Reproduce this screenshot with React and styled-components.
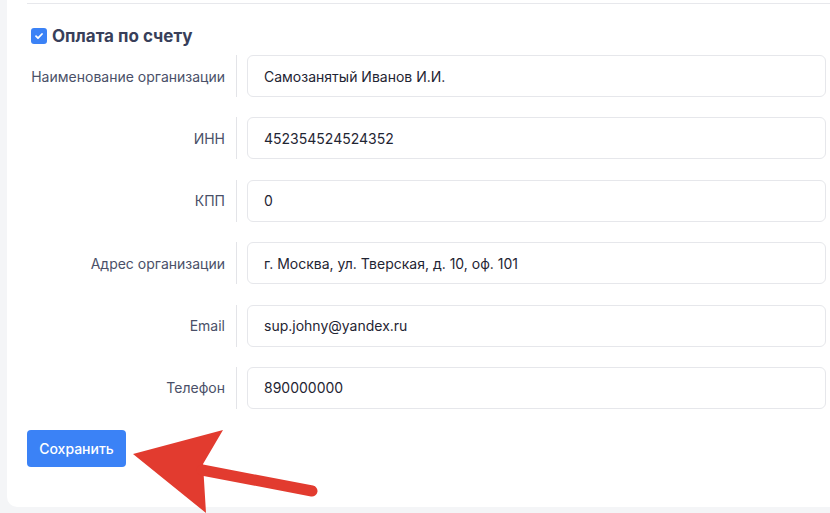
import React from "react";
import styled, { createGlobalStyle } from "styled-components";

const GlobalStyle = createGlobalStyle`
  html, body {
    margin: 0;
    padding: 0;
    background: #f4f5f7;
    font-family: Inter, "Noto Sans", "Liberation Sans", sans-serif;
  }
`;

const Page = styled.div`
  position: relative;
  width: 830px;
  height: 513px;
  overflow: hidden;
  padding: 0 0 6px 7px;
  box-sizing: border-box;
`;

const Card = styled.div`
  background: #fff;
  border-radius: 0 0 0 10px;
  padding: 3px 0 40px 20px;
  height: 100%;
  box-sizing: border-box;
`;

const Divider = styled.div`
  height: 1px;
  background: #e7e8ec;
`;

const Heading = styled.label`
  display: flex;
  align-items: center;
  gap: 5px;
  margin: 21px 0 8px 4px;
  font-size: 17px;
  font-weight: 700;
  color: #383f5a;
  line-height: 22px;
`;

const Check = styled.span`
  width: 16px;
  height: 16px;
  border-radius: 3px;
  background: #3b82f6;
  display: flex;
  align-items: center;
  justify-content: center;
`;

const Rows = styled.div`
  display: flex;
  flex-direction: column;
  gap: 20.4px;
`;

const Row = styled.div`
  display: flex;
  align-items: stretch;
  height: 42px;
`;

const Label = styled.div`
  width: 210px;
  box-sizing: border-box;
  padding-right: 11px;
  border-right: 1px solid #e3e4e8;
  display: flex;
  align-items: center;
  justify-content: flex-end;
  font-size: 14px;
  color: #4a5068;
`;

const Field = styled.div`
  flex: 1;
  margin: 0 4px 0 10px;
  border: 1px solid #e6e7eb;
  border-radius: 6px;
  padding-left: 16px;
  display: flex;
  align-items: center;
  font-size: 14px;
  color: #1f2533;
`;

const Button = styled.button`
  margin-top: 21px;
  width: 99px;
  height: 37px;
  border: none;
  border-radius: 4px;
  background: #3b82f6;
  color: #fff;
  font-family: inherit;
  font-size: 14px;
  font-weight: 500;
`;

const Arrow = styled.svg`
  position: absolute;
  left: 0;
  top: 0;
  pointer-events: none;
`;

const rows = [
  ["Наименование организации", "Самозанятый Иванов И.И."],
  ["ИНН", "452354524524352"],
  ["КПП", "0"],
  ["Адрес организации", "г. Москва, ул. Тверская, д. 10, оф. 101"],
  ["Email", "sup.johny@yandex.ru"],
  ["Телефон", "890000000"],
];

export default function App() {
  return (
    <>
      <GlobalStyle />
      <Page>
        <Card>
          <Divider />
          <Heading>
            <Check>
              <svg width="10" height="10" viewBox="0 0 10 10">
                <path d="M2 5.2l2 2 4-4.2" fill="none" stroke="#fff" strokeWidth="1.8" strokeLinecap="round" strokeLinejoin="round" />
              </svg>
            </Check>
            Оплата по счету
          </Heading>
          <Rows>
            {rows.map(([l, v]) => (
              <Row key={l}>
                <Label>{l}</Label>
                <Field>{v}</Field>
              </Row>
            ))}
          </Rows>
          <Button>Сохранить</Button>
        </Card>
        <Arrow width="830" height="513">
          <polygon points="133,454 223,430 203,464 206,513" fill="#e23b2f" />
          <line x1="202" y1="470" x2="312" y2="491" stroke="#e23b2f" strokeWidth="11" strokeLinecap="round" />
        </Arrow>
      </Page>
    </>
  );
}
